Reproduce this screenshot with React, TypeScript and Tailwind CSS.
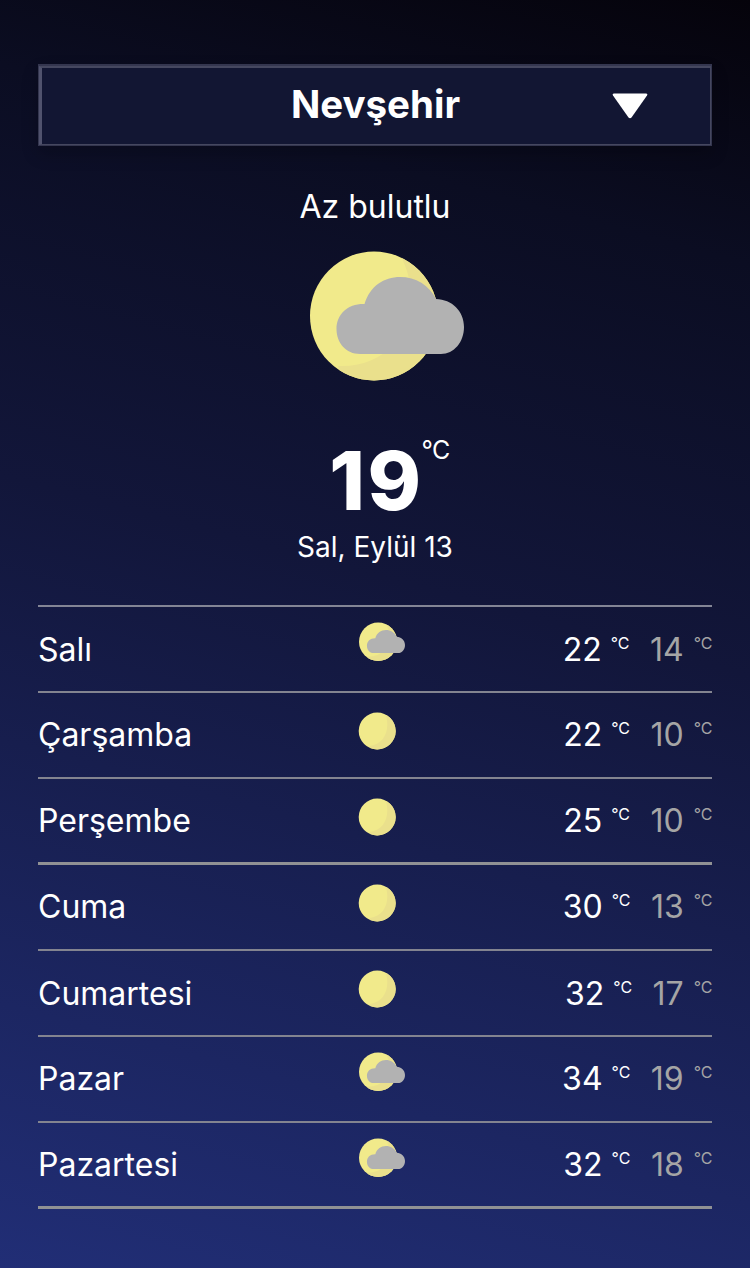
type Kind = "cloudy" | "clear";
type Day = { name: string; kind: Kind; high: number; low: number; row: string; text: string };

const thin = "h-[86px] border-b-2 border-[#838490]";
const thick = "h-[86px] border-b-[3px] border-[#909194]";

const days: Day[] = [
  { name: "Salı", kind: "cloudy", high: 22, low: 14, row: thin, text: "mt-[23px]" },
  { name: "Çarşamba", kind: "clear", high: 22, low: 10, row: thin, text: "mt-[22px]" },
  { name: "Perşembe", kind: "clear", high: 25, low: 10, row: thick, text: "mt-[22px]" },
  { name: "Cuma", kind: "clear", high: 30, low: 13, row: thin, text: "mt-[22px]" },
  { name: "Cumartesi", kind: "clear", high: 32, low: 17, row: thin, text: "mt-[23px]" },
  { name: "Pazar", kind: "cloudy", high: 34, low: 19, row: thin, text: "mt-[22px]" },
  { name: "Pazartesi", kind: "cloudy", high: 32, low: 18, row: thick, text: "mt-[22px]" },
];

function PartlyCloudy({ className }: { className: string }) {
  return (
    <svg viewBox="0 0 154 130" className={className}>
      <defs>
        <clipPath id="sun-disc">
          <ellipse cx="64" cy="65" rx="64" ry="64.5" />
        </clipPath>
      </defs>
      <ellipse cx="64" cy="65" rx="64" ry="64.5" fill="#f1ea8b" />
      <path clipPath="url(#sun-disc)" d="M88 0C107 32 105 71 84 93C70 108 52 116 28 115L36 140H140V0Z" fill="#eae08c" />
      <path d="M50 103C36 103 26.500 92 26.500 78C26.500 63 38 52.500 54.500 53C60 35 74 26 90 26C106 26 119 34 126 48C142 48.500 154 60 154 76C154 91 144 103 131 103Z" fill="#b2b2b2" />
    </svg>
  );
}

function Sun({ className }: { className: string }) {
  return (
    <svg viewBox="0 0 38 38" className={className}>
      <defs>
        <clipPath id="clear-disc">
          <circle cx="19.2" cy="19" r="18.5" />
        </clipPath>
      </defs>
      <circle cx="19.2" cy="19" r="18.5" fill="#f1ea8b" />
      <path clipPath="url(#clear-disc)" d="M27 0C33 17 27 32 12 34V40H40V0Z" fill="#eae08c" />
    </svg>
  );
}

export default function App() {
  return (
    <main className="flex h-[1268px] w-[750px] flex-col bg-[linear-gradient(15deg,#212e76_0%,#12163a_54%,#0b0d22_82%,#05030b_100%)] px-[38px] pt-16 font-['Inter',sans-serif] text-white">
      <div className="h-[82px] shrink-0 border border-t-2 border-[#34364f] shadow-[0_8px_16px_rgba(0,0,0,0.2)]">
        <div className="grid h-full grid-cols-[1fr_auto_1fr] items-center border border-t-2 border-l-[3px] border-[#45475f] border-l-[#50526d] bg-[#121633]">
          <span />
          <h1 className="-mt-[4px] pr-px text-[38.5px] leading-[48px] font-bold">Nevşehir</h1>
          <svg viewBox="0 0 36 26" className="mr-[62.5px] h-[26px] w-9 justify-self-end" fill="#fff">
            <path d="M2 .5H34Q36 .5 35 2.500L19.500 24.500Q18 26 16.500 24.500L1 2.500Q0 .5 2 .5Z" />
          </svg>
        </div>
      </div>
      <p className="mt-[41px] text-center text-[32px] leading-10">Az bulutlu</p>
      <PartlyCloudy className="mt-[24px] ml-[272px] h-[130px] w-[154px] shrink-0" />
      <div className="mt-[51px] flex h-[96px] justify-center pl-[29px]">
        <span className="-mt-px text-[81px] leading-[100px] font-extrabold tracking-[2.5px]">19</span>
        <span className="mt-[2px] ml-[-2px] text-[25px] leading-[32px] tracking-[-0.5px]">°C</span>
      </div>
      <p className="-mt-px text-center text-[28px] leading-10">Sal, Eylül 13</p>
      <ul className="mt-[38px] border-t-2 border-[#838595]">
        {days.map((day) => (
          <li key={day.name} className={`grid grid-cols-[320px_1fr_auto] ${day.row}`}>
            <span className={`${day.text} text-[32px] leading-10`}>{day.name}</span>
            {day.kind === "cloudy" ? (
              <PartlyCloudy className="mt-[15px] ml-[0.5px] h-[39.5px] w-[46px]" />
            ) : (
              <Sun className="mt-[19px] h-[38px] w-[38px]" />
            )}
            <div className={`${day.text} -mr-[0.5px] flex text-[32px] leading-10`}>
              <span>{day.high}</span>
              <span className="ml-[9px] text-[16px] leading-[26px]">°C</span>
              <span className="ml-[20.5px] text-[#a5a5a5]">{day.low}</span>
              <span className="ml-[10px] text-[16px] leading-[26px] text-[#a5a5a5]">°C</span>
            </div>
          </li>
        ))}
      </ul>
    </main>
  );
}
